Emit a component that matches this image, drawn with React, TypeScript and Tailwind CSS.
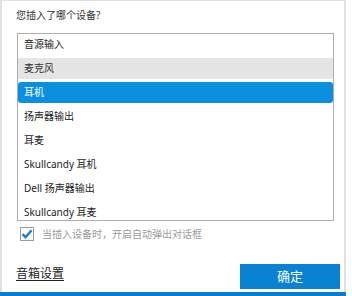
import React from "react";

const items = [
  "音源输入",
  "麦克风",
  "耳机",
  "扬声器输出",
  "耳麦",
  "Skullcandy 耳机",
  "Dell 扬声器输出",
  "Skullcandy 耳麦",
];

export default function App() {
  return (
    <div
      className="w-[352px] h-[296px] bg-white flex flex-col overflow-hidden"
      style={{ fontFamily: '"Noto Sans", "Noto Sans CJK SC", sans-serif' }}
    >
      <div className="w-[346px] h-[292px] border-l-2 border-r-2 border-t border-[#e0e0e0] flex flex-col pl-[14px]">
        <div className="pt-[7px] text-[10px] leading-[14px] text-[#333]">您插入了哪个设备?</div>
        <div className="mt-[11px] ml-[1px] w-[317px] h-[188px] border border-[#adadad] overflow-hidden">
          <div className="-mt-[2px] flex flex-col">
            {items.map((t, i) => {
              const hover = i === 1;
              const sel = i === 2;
              return (
                <div key={i} className="h-[24px] flex flex-col justify-center">
                  <div
                    className={
                      "h-[21px] flex items-center pl-[6px] text-[10px] " +
                      (sel
                        ? "bg-[#0b8fde] text-white rounded-[3px]"
                        : hover
                        ? "bg-[#e5e5e5] text-[#333]"
                        : "text-[#222]")
                    }
                  >
                    {t}
                  </div>
                </div>
              );
            })}
          </div>
        </div>
        <div className="mt-[5px] flex items-center h-[16px] pl-[4px]">
          <div className="w-[14px] h-[14px] border border-[#9a9a9a] bg-white flex items-center justify-center">
            <svg width="12" height="12" viewBox="0 0 12 12">
              <path d="M1.5 6.2 L4.6 9.2 L10.6 2.2" fill="none" stroke="#1a7fd4" strokeWidth="2.4" />
            </svg>
          </div>
          <span className="ml-[8px] text-[10px] text-[#9a9a9a] leading-[14px]">当插入设备时，开启自动弹出对话框</span>
        </div>
        <div className="mt-auto mb-[3px] flex items-end justify-between pr-[4px]">
          <span className="text-[12px] text-[#222] underline underline-offset-2 mb-[6px]">音箱设置</span>
          <button className="w-[100px] h-[25px] bg-[#0a82d4] text-white text-[13px] flex items-center justify-center">
            确定
          </button>
        </div>
      </div>
      <div className="w-[346px] h-[4px] bg-[#0a7cd0]" />
    </div>
  );
}
